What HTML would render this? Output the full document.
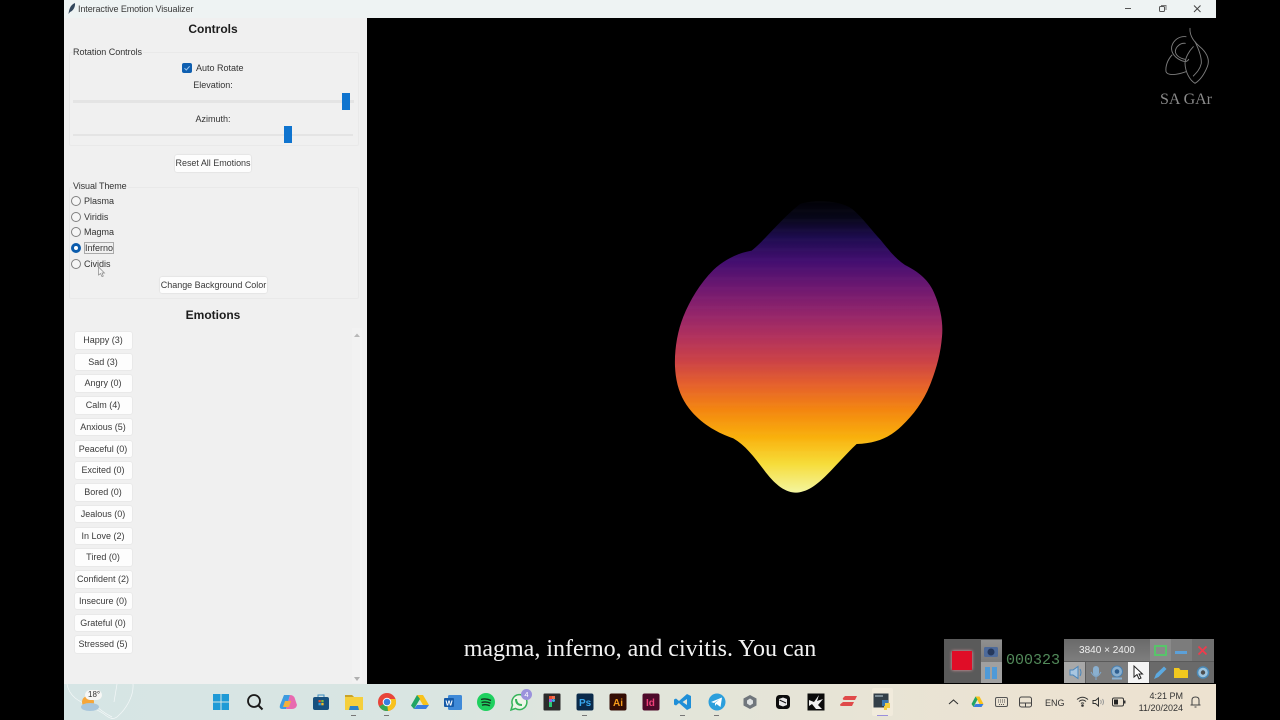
<!DOCTYPE html>
<html><head><meta charset="utf-8"><style>
html{background:#000}
html,body{margin:0;padding:0;width:1280px;height:720px;overflow:hidden;background:#000;font-family:"Liberation Sans",sans-serif;color:#222}
body{filter:blur(.3px)}
div,span,svg{position:absolute;box-sizing:border-box}
.t{white-space:nowrap;font-size:9px;line-height:12px;color:#333}
.c{transform:translateX(-50%);text-align:center}
.b{left:74.5px;width:57px;height:16.5px;background:#fdfdfd;border-radius:2px;box-shadow:0 0 1.5px #d4d4d4;text-align:center;font-size:9px;line-height:16.5px;color:#3a3a3a;white-space:nowrap}
.r{left:70.5px;width:10px;height:10px;border:1px solid #808080;border-radius:50%;background:#f6f6f6}
.f{border:1px solid #e9e9e9;border-radius:2px}
.bb{background:#fdfdfd;border-radius:2px;box-shadow:0 0 1.5px #c8c8c8;font-size:9px;text-align:center;color:#3a3a3a;white-space:nowrap}
.i{top:692px;width:20px;height:20px}
.g{background:linear-gradient(#8f8f8f,#7a7a7a)}
</style></head><body>

<div style="left:64px;top:0;width:1152px;height:18px;background:#eef3f3"></div>
<svg style="left:67px;top:2px" width="10" height="13" viewBox="0 0 10 13"><path d="M1.500 12C2 8 3 3 8 1C8.500 5 6 9 3 10Z" fill="#33475c"/></svg>
<div class="t" style="left:78px;top:3px;font-size:9px;color:#3a3a3a;letter-spacing:-.1px">Interactive Emotion Visualizer</div>
<svg style="left:1120px;top:2px" width="90" height="14" viewBox="0 0 90 14"><path d="M5 6.500H11" stroke="#555" fill="none"/><rect x="39.500" y="4.500" width="5" height="5" rx="1" stroke="#555" fill="none"/><path d="M41 3.500H46V8" stroke="#777" fill="none"/><path d="M74 3.500L80.500 10M80.500 3.500L74 10" stroke="#444" fill="none"/></svg>

<div style="left:64px;top:18px;width:302.500px;height:666px;background:#f0f0f0"></div>
<div style="left:366.500px;top:18px;width:849.500px;height:666px;background:#000"></div>

<div class="t c" style="left:213px;top:22px;font-size:12px;line-height:15px;font-weight:bold;color:#1c1c1c">Controls</div>
<div class="f" style="left:69px;top:52px;width:290px;height:94px"></div>
<div class="t" style="left:73px;top:46px;background:#f0f0f0;padding-right:1px;letter-spacing:-.03px">Rotation Controls</div>
<div style="left:182px;top:63px;width:10px;height:10px;background:#0f5fb0;border-radius:2px"></div>
<svg style="left:182px;top:63px" width="10" height="10" viewBox="0 0 10 10"><path d="M2.500 5.200L4.300 7L7.600 3.300" stroke="#9ec8f0" fill="none"/></svg>
<div class="t" style="left:196px;top:62px">Auto Rotate</div>
<div class="t c" style="left:213px;top:79px">Elevation:</div>
<div style="left:73px;top:100px;width:281px;height:2.500px;background:#e4e4e4"></div>
<div style="left:341.500px;top:92.500px;width:8.500px;height:17px;background:#0f74cf"></div>
<div class="t c" style="left:213px;top:113px">Azimuth:</div>
<div style="left:73px;top:133.500px;width:280px;height:2.500px;background:#e4e4e4"></div>
<div style="left:283.500px;top:126px;width:8.500px;height:17px;background:#0f74cf"></div>
<div class="bb" style="left:175px;top:155px;width:76px;height:16.500px;line-height:16.500px;letter-spacing:-.03px">Reset All Emotions</div>

<div class="f" style="left:69px;top:186.500px;width:290px;height:112px"></div>
<div class="t" style="left:73px;top:180px;background:#f0f0f0;padding-right:1px;letter-spacing:-.1px">Visual Theme</div>
<div class="r" style="top:196px"></div><div class="t" style="left:84px;top:195px">Plasma</div>
<div class="r" style="top:211.500px"></div><div class="t" style="left:84px;top:210.500px">Viridis</div>
<div class="r" style="top:227px"></div><div class="t" style="left:84px;top:226px">Magma</div>
<div class="r" style="top:243px;border:3px solid #0b5cad;background:#fff"></div>
<div class="t" style="left:83.500px;top:242px;height:12px;width:30px;border:1px solid #aaa;padding-left:.5px;line-height:10px">Inferno</div>
<div class="r" style="top:259px"></div><div class="t" style="left:84px;top:258px">Cividis</div>
<svg style="left:97px;top:266px" width="10" height="12" viewBox="0 0 10 12"><path d="M1.500 1V9L3.500 7.500L5 10.500L6.300 10L5 7H7.500Z" fill="#f4f4f4" stroke="#888" stroke-width=".7"/></svg>
<div class="bb" style="left:160px;top:276.500px;width:107px;height:16.500px;line-height:16.500px;letter-spacing:-.03px">Change Background Color</div>

<div class="t c" style="left:213px;top:308px;font-size:12px;line-height:15px;font-weight:bold;color:#1c1c1c">Emotions</div>
<div style="left:352px;top:328px;width:10px;height:355px;background:#f2f2f2"></div>
<svg style="left:352px;top:331px" width="10" height="8"><path d="M2 6L5 2.500L8 6Z" fill="#b8b8b8"/></svg>
<svg style="left:352px;top:675px" width="10" height="8"><path d="M2 2L5 6L8 2Z" fill="#b0b0b0"/></svg>

<div class="b" style="top:332px">Happy (3)</div>
<div class="b" style="top:353.700px">Sad (3)</div>
<div class="b" style="top:375.400px">Angry (0)</div>
<div class="b" style="top:397.100px">Calm (4)</div>
<div class="b" style="top:418.800px">Anxious (5)</div>
<div class="b" style="top:440.500px">Peaceful (0)</div>
<div class="b" style="top:462.200px">Excited (0)</div>
<div class="b" style="top:484px">Bored (0)</div>
<div class="b" style="top:505.700px">Jealous (0)</div>
<div class="b" style="top:527.500px">In Love (2)</div>
<div class="b" style="top:549.200px">Tired (0)</div>
<div class="b" style="top:571px">Confident (2)</div>
<div class="b" style="top:592.800px">Insecure (0)</div>
<div class="b" style="top:614.500px">Grateful (0)</div>
<div class="b" style="top:636.300px">Stressed (5)</div>

<svg style="left:650px;top:190px" width="310" height="310" viewBox="0 0 930 930">
<defs>
<linearGradient id="inf" gradientUnits="userSpaceOnUse" x1="0" y1="30" x2="0" y2="908">
<stop offset="0" stop-color="#010105"/><stop offset=".06" stop-color="#070618"/><stop offset=".13" stop-color="#1e0c50"/><stop offset=".21" stop-color="#430e70"/><stop offset=".3" stop-color="#6e1870"/><stop offset=".39" stop-color="#94256a"/><stop offset=".47" stop-color="#b2325c"/><stop offset=".55" stop-color="#cb4246"/><stop offset=".63" stop-color="#e5602c"/><stop offset=".72" stop-color="#f4870f"/><stop offset=".81" stop-color="#f9b00c"/><stop offset=".9" stop-color="#f6dc38"/><stop offset="1" stop-color="#f4f6a0"/>
</linearGradient>
<pattern id="st" width="10" height="29" patternUnits="userSpaceOnUse"><rect width="10" height="9" fill="#fff" opacity=".012"/></pattern>
</defs>
<path d="M450 42C495 28 570 30 608 58C640 85 662 118 692 150C715 178 735 205 765 225C805 245 838 270 855 315C872 355 880 400 876 440C872 490 860 535 840 585C820 635 790 675 755 708C720 742 680 760 620 762C590 790 565 820 530 855C500 885 470 908 435 908C400 905 372 880 342 840C312 800 285 765 250 745C205 730 160 705 125 665C95 630 78 590 75 530C73 480 82 425 100 380C120 330 150 280 190 240C222 210 260 190 305 182C345 150 390 90 450 42Z" fill="url(#inf)"/>
<path d="M450 42C495 28 570 30 608 58C640 85 662 118 692 150C715 178 735 205 765 225C805 245 838 270 855 315C872 355 880 400 876 440C872 490 860 535 840 585C820 635 790 675 755 708C720 742 680 760 620 762C590 790 565 820 530 855C500 885 470 908 435 908C400 905 372 880 342 840C312 800 285 765 250 745C205 730 160 705 125 665C95 630 78 590 75 530C73 480 82 425 100 380C120 330 150 280 190 240C222 210 260 190 305 182C345 150 390 90 450 42Z" fill="url(#st)"/>
</svg>

<svg style="left:1130px;top:20px" width="90" height="90" viewBox="0 0 270 270" fill="none" stroke="#7c7c7c" stroke-width="2.800" stroke-linecap="round"><path d="M180 25C178 50 195 68 215 85C232 102 240 120 232 140C222 165 208 182 195 190C178 180 166 155 165 130C166 112 178 92 190 80"/><path d="M195 65C205 85 215 110 214 130C210 148 200 158 190 168"/><path d="M168 50C148 48 130 60 125 80C122 100 138 115 155 122C165 126 172 125 176 118"/><path d="M166 70C150 68 136 82 136 95C138 108 152 115 165 118"/><path d="M126 105C112 120 106 140 108 155C112 168 140 165 168 155"/></svg>
<div class="t" style="left:1160px;top:91.500px;font-family:'Liberation Serif',serif;font-size:16px;line-height:16px;color:#8a8a8a">SA GAr</div>

<div class="t c" style="left:640px;top:637px;font-family:'Liberation Serif',serif;font-size:24px;line-height:24px;color:#f2f2f2">magma, inferno, and civitis. You can</div>

<!-- recorder -->
<div style="left:943.500px;top:639px;width:270px;height:44px;background:#5a5a5a"></div>
<div style="left:952px;top:651px;width:20px;height:19px;background:#e00d27;box-shadow:0 0 3px #f4a0a8"></div>
<div class="g" style="left:981px;top:640px;width:21px;height:21.500px"></div>
<div class="g" style="left:981px;top:662px;width:21px;height:21px;background:#a0a0a0"></div>
<svg style="left:981px;top:642px" width="20" height="40" viewBox="0 0 20 40"><rect x="3" y="5" width="14" height="10" rx="1.500" fill="#4d6a9a"/><circle cx="10" cy="10" r="3.500" fill="#25385c"/><rect x="4" y="25" width="5" height="12" fill="#4f9ad8"/><rect x="11" y="25" width="5" height="12" fill="#4f9ad8"/></svg>
<div style="left:1002px;top:639px;width:62px;height:44px;background:#000"></div>
<div class="t" style="left:1006px;top:652px;font-family:'Liberation Mono',monospace;font-size:15px;line-height:18px;color:#528a5a">000323</div>
<div style="left:1064px;top:639px;width:86px;height:22px;background:linear-gradient(#6a6a6a,#7e7e7e)"></div>
<div class="t c" style="left:1107px;top:644.500px;font-size:10px;color:#f0f0f0">3840 × 2400</div>
<div style="left:1150px;top:639px;width:20.500px;height:22px;background:#8a8a8a"></div>
<div style="left:1153.500px;top:645px;width:13px;height:11px;border:2px solid #58c46a"></div>
<div style="left:1170.500px;top:639px;width:21px;height:22px;background:#7c7c7c"></div>
<div style="left:1175px;top:651px;width:12px;height:3px;background:#5ca0d8"></div>
<div style="left:1191.500px;top:639px;width:22px;height:22px;background:#707070"></div>
<svg style="left:1197px;top:645px" width="11" height="11"><path d="M1.500 1.500L9.500 9.500M9.500 1.500L1.500 9.500" stroke="#f03b4c" stroke-width="1.800"/></svg>
<div style="left:1064px;top:662px;width:149.500px;height:21px;background:#5d5d5d"></div>
<div style="left:1064px;top:662px;width:21px;height:21px;background:#a8a8a8"></div>
<div style="left:1085.500px;top:662px;width:21px;height:21px;background:#7c7c7c"></div>
<div style="left:1107px;top:662px;width:21px;height:21px;background:#7c7c7c"></div>
<div style="left:1128px;top:662px;width:21px;height:21px;background:#f4f4f4"></div>
<div style="left:1149.500px;top:662px;width:21px;height:21px;background:#6a6a6a"></div>
<div style="left:1171px;top:662px;width:21px;height:21px;background:#6a6a6a"></div>
<div style="left:1192px;top:662px;width:21.500px;height:21px;background:#6a6a6a"></div>
<svg style="left:1064px;top:662px" width="150" height="21" viewBox="0 0 150 21">
<path d="M6 8H9L14 4.500V16.500L9 13H6Z" fill="#a9c6e0" stroke="#4a86bb"/><path d="M16 7Q18 10.500 16 14" stroke="#4a86bb" fill="none"/>
<rect x="29" y="4" width="6" height="10" rx="3" fill="#8ab0d0"/><path d="M27 10Q32 19 37 10M32 15V18" stroke="#7fa8cc" fill="none"/>
<circle cx="53" cy="9.500" r="5.500" fill="#8ab0d0" stroke="#4a80b0"/><circle cx="53" cy="9.500" r="2.300" fill="#2f5f90"/><rect x="48" y="15.500" width="10" height="2" fill="#8ab0d0"/>
<path d="M70 4V15L73 12.500L75 17L77 16L75 12H78.500Z" fill="#fff" stroke="#222"/>
<path d="M90 17L92 12L100 4.500L102.500 7L94.500 15Z" fill="#5ca9e0"/>
<path d="M110 6H115L116.500 8H124V16H110Z" fill="#f2c81e"/>
<circle cx="139" cy="10.500" r="5.500" fill="#9ec4de" stroke="#4a8ab8" stroke-width="1.500"/><circle cx="139" cy="10.500" r="2.200" fill="#4e4e4e"/>
</svg>

<!-- taskbar -->
<div style="left:64px;top:684px;width:1152px;height:36px;background:linear-gradient(90deg,#d6e5e5 0%,#d9e5e2 30%,#e3e5d9 55%,#ebe3d3 80%,#ede2d0 100%)"></div>
<svg style="left:64px;top:684px" width="80" height="36" fill="none" stroke="#f4f8f8" stroke-width=".7"><path d="M3 0C6 18 25 20 40 30C46 35 50 36 54 32C62 25 70 12 69 0"/><path d="M30 20C36 26 42 30 48 33"/><path d="M53 0L50 18"/></svg>
<svg style="left:78px;top:690px" width="26" height="24" viewBox="0 0 26 24"><circle cx="10" cy="12" r="6" fill="#f6a63a"/><ellipse cx="12" cy="17" rx="9" ry="4" fill="#a9c6dc"/></svg>
<div style="left:85px;top:690px;width:17px;height:10px;background:#f7f7f5;border-radius:5px"></div>
<div class="t" style="left:88px;top:690px;font-size:8px;line-height:10px;color:#333">18°</div>

<svg class="i" style="left:211px" viewBox="0 0 20 20"><path d="M2 2H9.500V9.500H2ZM10.500 2H18V9.500H10.500ZM2 10.500H9.500V18H2ZM10.500 10.500H18V18H10.500Z" fill="#1f9ad6"/></svg>
<svg class="i" style="left:245px" viewBox="0 0 20 20"><circle cx="9" cy="9" r="6" fill="none" stroke="#1a1a1a" stroke-width="1.800"/><path d="M13.500 13.500L17.500 17.500" stroke="#1a1a1a" stroke-width="2"/></svg>
<svg class="i" style="left:278px" viewBox="0 0 20 20"><path d="M6 3H12L8 17H4Q1 17 2 13Z" fill="#3c9be0"/><path d="M12 3Q16 3 17 7L19 13Q18 17 14 17H8L12 3Z" fill="#e86ab0"/><path d="M7 9H13L11 15H5Z" fill="#f2b03c"/></svg>
<svg class="i" style="left:311px" viewBox="0 0 20 20"><rect x="2" y="5" width="16" height="13" rx="2" fill="#18507e"/><path d="M7 5V3H13V5" stroke="#3a8ac0" fill="none"/><rect x="7.500" y="8" width="2.300" height="2.300" fill="#e8502c"/><rect x="10.300" y="8" width="2.300" height="2.300" fill="#7cbc3c"/><rect x="7.500" y="11" width="2.300" height="2.300" fill="#2ca0e0"/><rect x="10.300" y="11" width="2.300" height="2.300" fill="#f6bc28"/></svg>
<svg class="i" style="left:344px" viewBox="0 0 20 20"><path d="M1 3H8L10 5H19V18H1Z" fill="#f5cf3c"/><path d="M1 3H8L10 5H1Z" fill="#c9a228"/><path d="M6 14H14L15 18H5Z" fill="#2b82c8"/></svg>
<div style="left:351px;top:714.500px;width:5px;height:1.500px;background:#777"></div>
<svg class="i" style="left:377px" viewBox="0 0 20 20"><circle cx="10" cy="10" r="9" fill="#e8453a"/><path d="M10 10L2.200 14.500A9 9 0 0 0 11 19Z" fill="#35a853"/><path d="M10 10L11 19A9 9 0 0 0 18.500 7H10Z" fill="#f8c21c"/><circle cx="10" cy="10" r="4.300" fill="#fff"/><circle cx="10" cy="10" r="3.300" fill="#3a7fe0"/></svg>
<div style="left:384px;top:714.500px;width:5px;height:1.500px;background:#777"></div>
<svg class="i" style="left:410px" viewBox="0 0 20 20"><path d="M7 3H13L19 13H13Z" fill="#f8c21c"/><path d="M7 3L1 13.500L4 17L10 7Z" fill="#21a464"/><path d="M4 17H16L19 13H7Z" fill="#3a7de0"/></svg>
<svg class="i" style="left:443px" viewBox="0 0 20 20"><rect x="5" y="3" width="14" height="15" rx="1.500" fill="#3f8ad8"/><rect x="1" y="6" width="10" height="9" rx="1" fill="#155aa8"/><text x="2.500" y="13.500" font-size="7.500" font-weight="bold" fill="#fff" font-family="Liberation Sans">W</text></svg>
<svg class="i" style="left:476px" viewBox="0 0 20 20"><circle cx="10" cy="10" r="9" fill="#1fd05f"/><path d="M5 7.500Q10 6 15 8.500M5.500 10.500Q10 9 14.500 11.200M6 13.200Q10 12 13.800 13.800" stroke="#14301e" stroke-width="1.400" fill="none"/></svg>
<svg class="i" style="left:509px" viewBox="0 0 20 20"><path d="M2 18L3.500 13A7.500 7.500 0 1 1 6.500 16.500Z" fill="#eef5e8" stroke="#35b45a" stroke-width="1.500"/><path d="M7 7Q7 13 13 13" stroke="#35b45a" stroke-width="2" fill="none"/></svg>
<div style="left:521px;top:689px;width:11px;height:11px;background:#9b92dc;border-radius:50%;color:#fff;font-size:7.500px;line-height:11px;text-align:center">4</div>
<svg class="i" style="left:542px" viewBox="0 0 20 20"><rect x="1.500" y="1.500" width="17" height="17" rx="1" fill="#2c2c2c"/><rect x="7" y="4" width="3" height="3" fill="#e8502c"/><rect x="10" y="4" width="3" height="3" fill="#f07050"/><rect x="7" y="7" width="3" height="3" fill="#a05ce0"/><circle cx="11.500" cy="8.500" r="1.500" fill="#30b8e8"/><rect x="7" y="10" width="3" height="3" fill="#2cc878"/><rect x="7" y="13" width="3" height="2" fill="#2cc878"/></svg>
<svg class="i" style="left:575px" viewBox="0 0 20 20"><rect x="1.500" y="1.500" width="17" height="17" rx="2" fill="#0a2a4a"/><text x="4" y="14" font-size="10" font-weight="bold" fill="#38a8f0" font-family="Liberation Sans">Ps</text></svg>
<div style="left:582px;top:714.500px;width:5px;height:1.500px;background:#777"></div>
<svg class="i" style="left:608px" viewBox="0 0 20 20"><rect x="1.500" y="1.500" width="17" height="17" rx="2" fill="#330d04"/><text x="5" y="14" font-size="10" font-weight="bold" fill="#f59c1a" font-family="Liberation Sans">Ai</text></svg>
<svg class="i" style="left:641px" viewBox="0 0 20 20"><rect x="1.500" y="1.500" width="17" height="17" rx="2" fill="#4e0a2a"/><text x="5" y="14" font-size="10" font-weight="bold" fill="#f0407a" font-family="Liberation Sans">Id</text></svg>
<svg class="i" style="left:673px" viewBox="0 0 20 20"><path d="M14 2L18 4V16L14 18L6 11L3 13.500L1 12.500V7.500L3 6.500L6 9ZM14 7L9.500 10L14 13Z" fill="#1f8fd8"/></svg>
<div style="left:680px;top:714.500px;width:5px;height:1.500px;background:#777"></div>
<svg class="i" style="left:707px" viewBox="0 0 20 20"><circle cx="10" cy="10" r="8.500" fill="#2c9fdc"/><path d="M4 10L15 5.500L13.500 15L9.500 12L8 14V11L13 7L7 11Z" fill="#fff"/></svg>
<div style="left:714px;top:714.500px;width:5px;height:1.500px;background:#777"></div>
<svg class="i" style="left:740px" viewBox="0 0 20 20"><path d="M10 3L16.500 6.500V13.500L10 17L3.500 13.500V6.500Z" fill="#70767c"/><path d="M10 6.500L13 8.500V11.500L10 13.500L7 11.500V8.500Z" fill="#dfe2e2"/></svg>
<svg class="i" style="left:773px" viewBox="0 0 20 20"><rect x="3" y="3" width="14" height="14" rx="3.500" fill="#0c0c0c"/><path d="M6 7L10 5.500L14 7V13L10 14.500L6 13Z" fill="#e8e8e8"/><path d="M6.500 8L13 11" stroke="#111"/></svg>
<svg class="i" style="left:806px" viewBox="0 0 20 20"><rect x="1.500" y="1.500" width="17" height="17" fill="#0b0b0b"/><path d="M3 8L8 10L13 3L11 9L17 7L12 13L16 17H10L6 12L3 14Z" fill="#f0f0f0"/></svg>
<svg class="i" style="left:839px" viewBox="0 0 20 20"><path d="M6 4H18L16 8H6Q3 8 4 6ZM4 10H15L13 14H3Q0 14 1.500 12Z" fill="#e04a4a"/></svg>
<div style="left:872px;top:688px;width:21px;height:28px;background:#f1ebdc;border-radius:2px"></div>
<svg class="i" style="left:872px" viewBox="0 0 20 20"><rect x="1.500" y="1.500" width="15" height="14" fill="#333f48"/><rect x="3" y="3" width="8" height="2" fill="#7a8a94"/><path d="M10 8H16V11H13V14H10Z" fill="#3a78b0"/><path d="M13 11H18V16H15V18H12V14H13Z" fill="#f4d040"/></svg>
<div style="left:877px;top:714.500px;width:11px;height:1.500px;background:#9a8fdc"></div>

<!-- tray -->
<svg style="left:948px;top:697px" width="11" height="10"><path d="M1 7L5.500 3L10 7" stroke="#333" fill="none" stroke-width="1.100"/></svg>
<svg style="left:971px;top:696px" width="13" height="12" viewBox="0 0 13 12"><path d="M4.500 0.500H8.500L12.500 8H8.500Z" fill="#f8c21c"/><path d="M4.500 .5L.5 8L2.500 11L6.500 3.500Z" fill="#21a464"/><path d="M2.500 11H10.500L12.500 8H4.500Z" fill="#3a7de0"/></svg>
<svg style="left:995px;top:697px" width="13" height="10" fill="none" stroke="#555"><rect x=".5" y=".5" width="12" height="9" rx="1.500"/><path d="M3 3H10M3 5H10M4 7.500H9" stroke-dasharray="1 1"/></svg>
<svg style="left:1019px;top:696px" width="13" height="12" fill="none" stroke="#444"><rect x=".5" y="1" width="12" height="10" rx="2"/><path d="M.5 7H12.500M6.500 7V11"/></svg>
<div class="t" style="left:1045px;top:697px;font-size:9px;color:#333">ENG</div>
<svg style="left:1076px;top:696px" width="13" height="11" fill="none" stroke="#333"><path d="M1 3.500Q6.500 -1 12 3.500M3 5.500Q6.500 2.500 10 5.500M5 7.500Q6.500 6.300 8 7.500"/><circle cx="6.500" cy="9.500" r=".8" fill="#333"/></svg>
<svg style="left:1092px;top:696px" width="13" height="12" fill="none" stroke="#333"><path d="M1 4.500H3.500L6.500 2V10L3.500 7.500H1Z"/><path d="M8.500 4Q10 6 8.500 8M10.500 3Q12.500 6 10.500 9" stroke="#999"/></svg>
<svg style="left:1112px;top:697px" width="14" height="10"><rect x=".5" y="1" width="11" height="8" rx="1.500" fill="none" stroke="#333"/><rect x="2" y="2.500" width="4" height="5" fill="#222"/><rect x="12" y="3.500" width="1.500" height="3" fill="#333"/></svg>
<div class="t" style="right:97px;top:690px;font-size:9px;line-height:12px;color:#333;text-align:right">4:21 PM</div>
<div class="t" style="right:97px;top:702px;font-size:9px;line-height:12px;color:#333;text-align:right">11/20/2024</div>
<svg style="left:1189px;top:695px" width="13" height="14" fill="none" stroke="#444"><path d="M3 10V5Q3 2 6.500 2Q10 2 10 5V10M1.500 10H11.500M5.500 12H7.500"/></svg>
</body></html>
